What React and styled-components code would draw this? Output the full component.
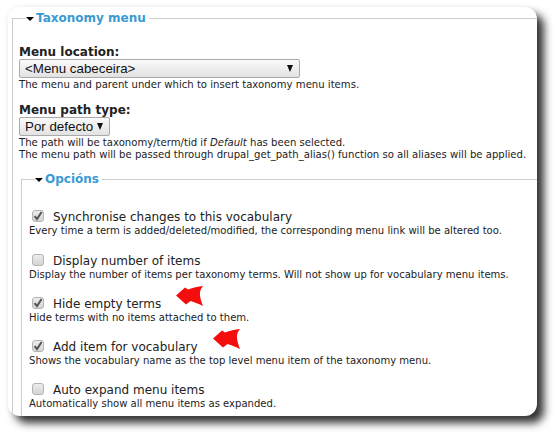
import React from "react";
import styled, { createGlobalStyle } from "styled-components";

const GlobalStyle = createGlobalStyle`
  html, body {
    margin: 0;
    background: #fff;
  }
  body {
    font-family: "DejaVu Sans", Verdana, sans-serif;
    font-size: 10px;
    color: #222;
    overflow: hidden;
  }
`;

const Page = styled.div`
  width: 560px;
  height: 439px;
  padding: 7px 23px 23px 8px;
  box-sizing: border-box;
`;

const Card = styled.div`
  height: 409px;
  padding-top: 4px;
  padding-left: 4px;
  box-sizing: border-box;
  background: #fff;
  border-radius: 12px;
  overflow: hidden;
  box-shadow: 7px 7px 8px rgba(0, 0, 0, 0.8), 0 0 6px rgba(0, 0, 0, 0.06);
`;

const Fieldset = styled.fieldset`
  margin: 0;
  padding: ${({ $nested }) => ($nested ? "0" : "0 6px")};
  margin-left: ${({ $nested }) => ($nested ? "2px" : "0")};
  margin-right: ${({ $nested }) => ($nested ? "0" : "-30px")};
  height: ${({ $nested }) => ($nested ? "260px" : "auto")};
  border: 0;
  border-top: 1px solid #ccc;
  border-left: 1px solid #ccc;
  min-width: 0;
`;

const Legend = styled.legend`
  margin-left: ${({ $nested }) => ($nested ? "13px" : "7px")};
  padding: 0 3px 0 0;
  display: flex;
  align-items: center;
  gap: 2px;
  font-size: 12px;
  font-weight: bold;
  line-height: 15px;
  color: #3a9ad3;
`;

const Caret = styled.span`
  width: 0;
  height: 0;
  border-left: 4px solid transparent;
  border-right: 4px solid transparent;
  border-top: 4px solid #000;
`;

const Field = styled.div`
  margin-top: ${({ $top }) => $top}px;
`;

const FieldLabel = styled.div`
  font-size: 12px;
  font-weight: bold;
  line-height: 14px;
`;

const Select = styled.div`
  display: flex;
  align-items: center;
  justify-content: space-between;
  box-sizing: border-box;
  width: ${({ $width }) => $width}px;
  height: 19px;
  margin-bottom: 1px;
  padding: 0 4px 0 5px;
  border: 1px solid #a9a9a9;
  border-radius: 2px;
  background: linear-gradient(#fafafa, #e2e2e2);
  font-family: "Liberation Sans", Arial, sans-serif;
  font-size: 13.33px;
  color: #111;
`;

const SelectArrow = styled.span`
  width: 0;
  height: 0;
  margin-right: 2px;
  border-left: 3.5px solid transparent;
  border-right: 3.5px solid transparent;
  border-top: 7px solid #111;
`;

const Description = styled.div`
  font-size: 10.1px;
  line-height: 12px;
  white-space: nowrap;
  em {
    font-style: italic;
  }
`;

const OptionDescription = styled(Description)`
  font-size: 10.05px;
`;

const OptionList = styled.div`
  padding: 22px 0 0 7px;
  display: flex;
  flex-direction: column;
  gap: 15px;
`;

const Option = styled.div`
  position: relative;
  &:first-child {
    margin-bottom: 1px;
  }
`;

const OptionRow = styled.div`
  display: flex;
  align-items: center;
  gap: 9px;
  height: 16px;
  margin-left: 3px;
  font-size: 12px;
`;

const Box = styled.span`
  display: flex;
  align-items: center;
  justify-content: center;
  box-sizing: border-box;
  width: 12px;
  height: 12px;
  margin-top: -2px;
  border: 1px solid #b4b4b4;
  border-radius: 3px;
  background: linear-gradient(#ececec, #d4d4d4);
`;

const Arrow = styled.svg`
  position: absolute;
  top: ${({ $top }) => $top}px;
  left: ${({ $left }) => $left}px;
  width: 28px;
  height: 21px;
`;

const options = [
  {
    label: "Synchronise changes to this vocabulary",
    text: "Every time a term is added/deleted/modified, the corresponding menu link will be altered too.",
    checked: true,
  },
  {
    label: "Display number of items",
    text: "Display the number of items per taxonomy terms. Will not show up for vocabulary menu items.",
    checked: false,
  },
  {
    label: "Hide empty terms",
    text: "Hide terms with no items attached to them.",
    checked: true,
    arrow: 147,
  },
  {
    label: "Add item for vocabulary",
    text: "Shows the vocabulary name as the top level menu item of the taxonomy menu.",
    checked: true,
    arrow: 184,
  },
  {
    label: "Auto expand menu items",
    text: "Automatically show all menu items as expanded.",
    checked: false,
  },
];

const Check = () => (
  <svg width="10" height="10" viewBox="0 0 10 10">
    <path d="M1.5 5.2 L4 8 L8.6 1" fill="none" stroke="#555" strokeWidth="2" />
  </svg>
);

const RedArrow = ({ left }) => (
  <Arrow $left={left} $top={-10} viewBox="0 0 28 21">
    <path
      d="M0 9.5 L9 1.5 L12 3.5 C17 1.5 22 0.5 27 0 C24.5 3 23.5 6 24 9.5 C24.5 13.5 26 17 27 20 C23 18 18.5 16 14.5 15 L10 18.5 Z"
      fill="#f40d0d"
    />
  </Arrow>
);

const App = () => {
  return (
    <>
      <GlobalStyle />
      <Page>
        <Card>
          <Fieldset>
            <Legend>
              <Caret />
              Taxonomy menu
            </Legend>
            <Field $top={19}>
              <FieldLabel>Menu location:</FieldLabel>
              <Select $width={281}>
                &lt;Menu cabeceira&gt;
                <SelectArrow />
              </Select>
              <Description>
                The menu and parent under which to insert taxonomy menu items.
              </Description>
            </Field>
            <Field $top={12}>
              <FieldLabel>Menu path type:</FieldLabel>
              <Select $width={91}>
                Por defecto
                <SelectArrow />
              </Select>
              <Description>
                The path will be taxonomy/term/tid if <em>Default</em> has been selected.
              </Description>
              <Description>
                The menu path will be passed through drupal_get_path_alias() function so all aliases will be applied.
              </Description>
            </Field>
            <Field $top={11}>
              <Fieldset $nested>
                <Legend $nested>
                  <Caret />
                  Opcións
                </Legend>
                <OptionList>
                  {options.map((option) => (
                    <Option key={option.label}>
                      <OptionRow>
                        <Box>{option.checked && <Check />}</Box>
                        {option.label}
                      </OptionRow>
                      <OptionDescription>{option.text}</OptionDescription>
                      {option.arrow && <RedArrow left={option.arrow} />}
                    </Option>
                  ))}
                </OptionList>
              </Fieldset>
            </Field>
          </Fieldset>
        </Card>
      </Page>
    </>
  );
};

export default App;
